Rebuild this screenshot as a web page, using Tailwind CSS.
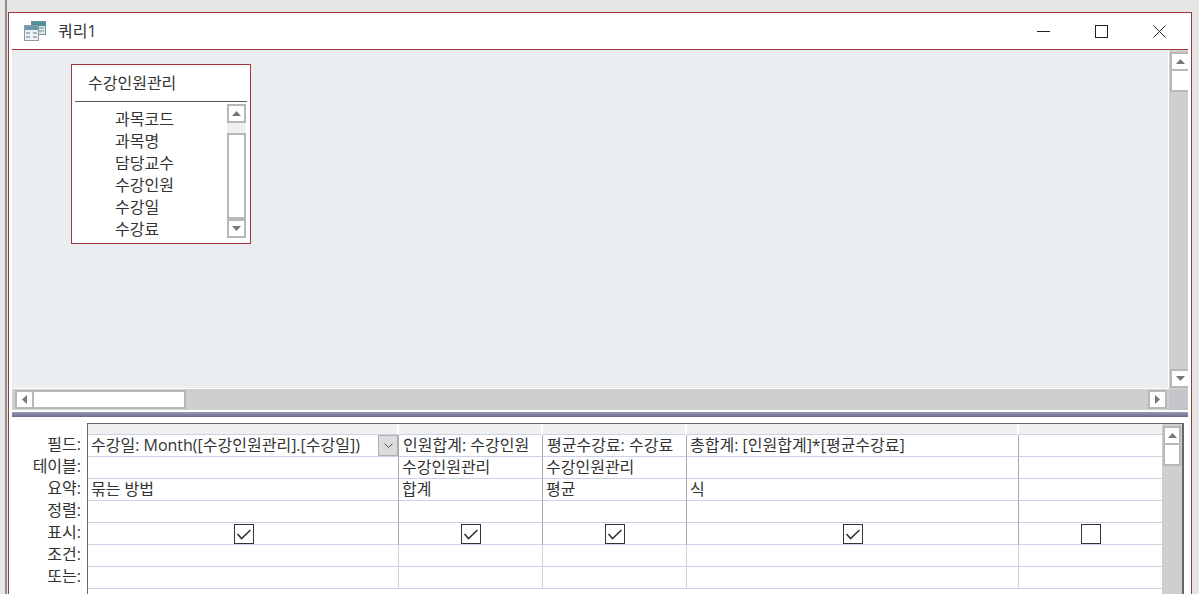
<!DOCTYPE html>
<html lang="ko"><head><meta charset="utf-8"><script src="https://cdn.jsdelivr.net/npm/@tailwindcss/browser@4"></script></head>
<body class="m-0 overflow-hidden">
<div class="relative flex w-[1199px] h-[594px] overflow-hidden bg-[#e6e6e6] text-[#333] text-[16px] font-['Open_Sans','Noto_Sans_CJK_KR',sans-serif]">
  <!-- left strip -->
  <div class="ml-[5px] w-[2px] shrink-0 bg-[#8c8c8c]"></div>
  <!-- window -->
  <div class="ml-[1px] mt-[12px] w-[1184px] h-[600px] shrink-0 border border-[#a4373a] bg-white px-[3px]">
    <!-- title bar -->
    <div class="flex items-center h-[37px] border-b border-[#a4373a] pr-[22px]">
      <svg class="ml-[12px] w-[22px] h-[20px]" viewBox="0 0 22 20">
        <rect x="7.5" y=".5" width="14" height="13" fill="#dfe7ea" stroke="#6f929b"/><rect x="8" y="1" width="13" height="4" fill="#4f9096"/><path d="M15 7h5M15 10h5" stroke="#a9bcc4" stroke-width="2"/>
        <rect x=".5" y="4.5" width="14" height="15" fill="#eef0f2" stroke="#8a9aa8"/><rect x="1" y="5" width="13" height="4" fill="#6a9aa6"/><path d="M2 12h4M9 12h4M2 16h4M9 16h4" stroke="#a8b4c0" stroke-width="2"/>
      </svg>
      <span class="ml-[12px] leading-none">쿼리1</span>
      <div class="ml-auto flex items-center gap-[45px]">
        <svg class="w-[13px] h-[13px]" viewBox="0 0 13 13"><path d="M0 6.5h13" stroke="#222"/></svg>
        <svg class="w-[13px] h-[13px]" viewBox="0 0 13 13"><rect x=".5" y=".5" width="12" height="12" fill="none" stroke="#222"/></svg>
        <svg class="w-[13px] h-[13px]" viewBox="0 0 13 13"><path d="M.5.5l12 12M12.5.5l-12 12" stroke="#222"/></svg>
      </div>
    </div>
    <!-- upper pane -->
    <div class="flex h-[362px] bg-[#cfcfcf]">
      <div class="flex flex-col w-[1157px] shrink-0">
        <div class="h-[339px] bg-[#e9edf0] border-r border-b border-white pt-[14px] pl-[59px]">
          <!-- field list -->
          <div class="flex flex-col w-[180px] h-[180px] border border-[#a4373a] bg-white">
            <div class="flex items-center h-[37px] mx-[3px] border-b border-[#555] pl-[13px]">수강인원관리</div>
            <div class="flex pl-[43px] pr-[4px] pt-[2px] h-[141px]">
              <div class="flex-1 flex flex-col pt-[4px]">
                <div class="h-[22px] leading-[22px]">과목코드</div><div class="h-[22px] leading-[22px]">과목명</div><div class="h-[22px] leading-[22px]">담당교수</div><div class="h-[22px] leading-[22px]">수강인원</div><div class="h-[22px] leading-[22px]">수강일</div><div class="h-[22px] leading-[22px]">수강료</div>
              </div>
              <div class="flex flex-col w-[19px] h-[134px] bg-[#f0f0f0]">
                <div class="flex items-center justify-center h-[19px] bg-white border-2 border-[#b8b8b8]"><svg class="w-[9px] h-[5px]" viewBox="0 0 9 5"><path d="M4.5 0L9 5H0z" fill="#777"/></svg></div>
                <div class="mt-[10px] h-[86px] bg-white border-2 border-[#b8b8b8]"></div>
                <div class="flex items-center justify-center h-[19px] bg-white border-2 border-[#b8b8b8]"><svg class="w-[9px] h-[5px]" viewBox="0 0 9 5"><path d="M4.5 5L9 0H0z" fill="#777"/></svg></div>
              </div>
            </div>
          </div>
        </div>
        <!-- h scroll -->
        <div class="flex h-[23px] pt-[1px] pl-[3px] pr-[2px] border-b-[2px] border-white">
          <div class="flex items-center justify-center w-[19px] h-[19px] bg-white border-2 border-[#b8b8b8]"><svg class="w-[5px] h-[9px]" viewBox="0 0 5 9"><path d="M0 4.5L5 0V9z" fill="#777"/></svg></div>
          <div class="w-[152px] h-[19px] bg-white border-2 border-l-0 border-[#b8b8b8]"></div>
          <div class="ml-auto flex items-center justify-center w-[19px] h-[19px] bg-white border-2 border-[#b8b8b8]"><svg class="w-[5px] h-[9px]" viewBox="0 0 5 9"><path d="M5 4.5L0 0V9z" fill="#777"/></svg></div>
        </div>
      </div>
      <!-- v scroll -->
      <div class="relative flex flex-col w-[19px] pt-[2px] pl-[1px] border-b-[2px] border-white">
        <div class="flex items-center justify-center h-[19px] bg-white border-2 border-r-0 border-[#b8b8b8]"><svg class="w-[9px] h-[5px]" viewBox="0 0 9 5"><path d="M4.5 0L9 5H0z" fill="#777"/></svg></div>
        <div class="h-[21px] bg-white border-2 border-r-0 border-t-0 border-[#b8b8b8]"></div>
        <div class="mt-[277px] flex items-center justify-center h-[19px] bg-white border-2 border-r-0 border-[#b8b8b8]"><svg class="w-[9px] h-[5px]" viewBox="0 0 9 5"><path d="M4.5 5L9 0H0z" fill="#777"/></svg></div>
        <div class="flex-1 mt-[2px] bg-[#c3c5ca] -ml-[1px]"></div>
      </div>
    </div>
    <!-- splitter -->
    <div class="h-[5px] bg-gradient-to-b from-[#9a9ab4] to-[#6a6a90]"></div>
    <!-- lower pane -->
    <div class="flex pt-[6px] pr-[6px]">
      <!-- row labels -->
      <div class="w-[75px] shrink-0 pt-[10px] pr-[6px] text-right">
        <div class="h-[22px] leading-[22px]">필드:</div><div class="h-[22px] leading-[22px]">테이블:</div><div class="h-[22px] leading-[22px]">요약:</div><div class="h-[22px] leading-[22px]">정렬:</div><div class="h-[22px] leading-[22px]">표시:</div><div class="h-[22px] leading-[22px]">조건:</div><div class="h-[22px] leading-[22px]">또는:</div>
      </div>
      <!-- grid -->
      <div class="flex flex-1 border-l border-t border-r-2 border-[#666] h-[180px]">
        <div class="grid w-[1074px] grid-cols-[311px_144px_144px_332px_143px] grid-rows-[11px_repeat(7,22px)] leading-[20px]">
          <div class="bg-[#f0f0f0] border-r-2 border-b border-white border-b-[#c8d4e6]"></div><div class="bg-[#f0f0f0] border-r-2 border-b border-white border-b-[#c8d4e6]"></div><div class="bg-[#f0f0f0] border-r-2 border-b border-white border-b-[#c8d4e6]"></div><div class="bg-[#f0f0f0] border-r-2 border-b border-white border-b-[#c8d4e6]"></div><div class="bg-[#f0f0f0] border-b border-b-[#c8d4e6]"></div>

          <div class="relative border-r border-b border-r-[#a9a9b0] border-b-[#c8d4e6] pl-[3px] whitespace-nowrap">수강일: Month([수강인원관리].[수강일])
            <div class="absolute right-0 top-0 flex items-center justify-center w-[20px] h-[21px] bg-[#dcdcdc] border border-[#b0b0b0]"><svg class="w-[9px] h-[5px]" viewBox="0 0 9 5"><path d="M.5.5l4 4 4-4" fill="none" stroke="#555"/></svg></div>
          </div>
          <div class="border-r border-b border-r-[#a9a9b0] border-b-[#c8d4e6] pl-[4px] whitespace-nowrap overflow-hidden">인원합계: 수강인원</div>
          <div class="border-r border-b border-r-[#a9a9b0] border-b-[#c8d4e6] pl-[4px] whitespace-nowrap overflow-hidden">평균수강료: 수강료</div>
          <div class="border-r border-b border-r-[#a9a9b0] border-b-[#c8d4e6] pl-[3px] whitespace-nowrap overflow-hidden">총합계: [인원합계]*[평균수강료]</div>
          <div class="border-b border-b-[#c8d4e6]"></div>

          <div class="border-r border-b border-r-[#a9a9b0] border-b-[#c8d4e6]"></div>
          <div class="border-r border-b border-r-[#a9a9b0] border-b-[#c8d4e6] pl-[3px]">수강인원관리</div>
          <div class="border-r border-b border-r-[#a9a9b0] border-b-[#c8d4e6] pl-[3px]">수강인원관리</div>
          <div class="border-r border-b border-r-[#a9a9b0] border-b-[#c8d4e6]"></div>
          <div class="border-b border-b-[#c8d4e6]"></div>

          <div class="border-r border-b border-r-[#a9a9b0] border-b-[#c8d4e6] pl-[3px]">묶는 방법</div>
          <div class="border-r border-b border-r-[#a9a9b0] border-b-[#c8d4e6] pl-[3px]">합계</div>
          <div class="border-r border-b border-r-[#a9a9b0] border-b-[#c8d4e6] pl-[3px]">평균</div>
          <div class="border-r border-b border-r-[#a9a9b0] border-b-[#c8d4e6] pl-[3px]">식</div>
          <div class="border-b border-b-[#c8d4e6]"></div>

          <div class="border-r border-b border-r-[#a9a9b0] border-b-[#c8d4e6]"></div><div class="border-r border-b border-r-[#a9a9b0] border-b-[#c8d4e6]"></div><div class="border-r border-b border-r-[#a9a9b0] border-b-[#c8d4e6]"></div><div class="border-r border-b border-r-[#a9a9b0] border-b-[#c8d4e6]"></div><div class="border-b border-b-[#c8d4e6]"></div>

          <div class="flex items-center justify-center pl-[2px] border-r border-b border-r-[#a9a9b0] border-b-[#c8d4e6]"><div class="w-[20px] h-[20px] border border-[#333]"><svg class="w-[18px] h-[18px]" viewBox="0 0 18 18"><path d="M2.5 9l4 4.5 9-8.5" fill="none" stroke="#333" stroke-width="1.6"/></svg></div></div>
          <div class="flex items-center justify-center border-r border-b border-r-[#a9a9b0] border-b-[#c8d4e6]"><div class="w-[20px] h-[20px] border border-[#333]"><svg class="w-[18px] h-[18px]" viewBox="0 0 18 18"><path d="M2.5 9l4 4.5 9-8.5" fill="none" stroke="#333" stroke-width="1.6"/></svg></div></div>
          <div class="flex items-center justify-center border-r border-b border-r-[#a9a9b0] border-b-[#c8d4e6]"><div class="w-[20px] h-[20px] border border-[#333]"><svg class="w-[18px] h-[18px]" viewBox="0 0 18 18"><path d="M2.5 9l4 4.5 9-8.5" fill="none" stroke="#333" stroke-width="1.6"/></svg></div></div>
          <div class="flex items-center justify-center border-r border-b border-r-[#a9a9b0] border-b-[#c8d4e6]"><div class="w-[20px] h-[20px] border border-[#333]"><svg class="w-[18px] h-[18px]" viewBox="0 0 18 18"><path d="M2.5 9l4 4.5 9-8.5" fill="none" stroke="#333" stroke-width="1.6"/></svg></div></div>
          <div class="flex items-center justify-center border-b border-b-[#c8d4e6]"><div class="w-[20px] h-[20px] border border-[#333]"></div></div>

          <div class="border-r border-b border-r-[#c8d4e6] border-b-[#c8d4e6]"></div><div class="border-r border-b border-r-[#c8d4e6] border-b-[#c8d4e6]"></div><div class="border-r border-b border-r-[#c8d4e6] border-b-[#c8d4e6]"></div><div class="border-r border-b border-r-[#c8d4e6] border-b-[#c8d4e6]"></div><div class="border-b border-b-[#c8d4e6]"></div>
          <div class="border-r border-b border-r-[#c8d4e6] border-b-[#c8d4e6]"></div><div class="border-r border-b border-r-[#c8d4e6] border-b-[#c8d4e6]"></div><div class="border-r border-b border-r-[#c8d4e6] border-b-[#c8d4e6]"></div><div class="border-r border-b border-r-[#c8d4e6] border-b-[#c8d4e6]"></div><div class="border-b border-b-[#c8d4e6]"></div>
        </div>
        <!-- grid scroll -->
        <div class="flex flex-col w-[20px] bg-[#cfcfcf] pt-[2px] pl-[1px] pr-[1px]">
          <div class="flex items-center justify-center h-[19px] bg-white border-2 border-[#b8b8b8]"><svg class="w-[9px] h-[5px]" viewBox="0 0 9 5"><path d="M4.5 0L9 5H0z" fill="#777"/></svg></div>
          <div class="h-[21px] bg-white border-2 border-t-0 border-[#b8b8b8]"></div>
        </div>
      </div>
    </div>
  </div>
</div>
</body></html>
